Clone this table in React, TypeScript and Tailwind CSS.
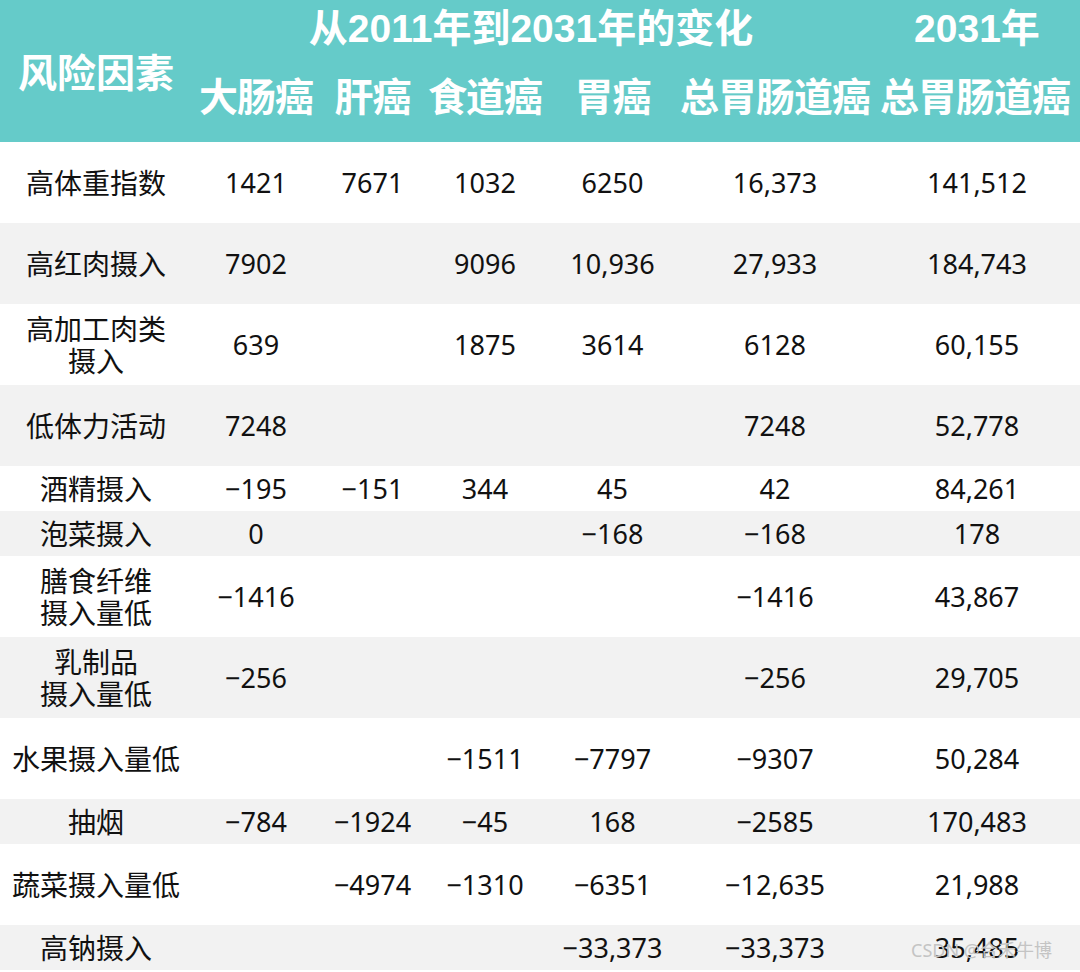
import React from "react";

type Row = { label: string[]; cells: string[]; tall: boolean };

const rows: Row[] = [
  { label: ["高体重指数"], cells: ["1421", "7671", "1032", "6250", "16,373", "141,512"], tall: true },
  { label: ["高红肉摄入"], cells: ["7902", "", "9096", "10,936", "27,933", "184,743"], tall: true },
  { label: ["高加工肉类", "摄入"], cells: ["639", "", "1875", "3614", "6128", "60,155"], tall: true },
  { label: ["低体力活动"], cells: ["7248", "", "", "", "7248", "52,778"], tall: true },
  { label: ["酒精摄入"], cells: ["−195", "−151", "344", "45", "42", "84,261"], tall: false },
  { label: ["泡菜摄入"], cells: ["0", "", "", "−168", "−168", "178"], tall: false },
  { label: ["膳食纤维", "摄入量低"], cells: ["−1416", "", "", "", "−1416", "43,867"], tall: true },
  { label: ["乳制品", "摄入量低"], cells: ["−256", "", "", "", "−256", "29,705"], tall: true },
  { label: ["水果摄入量低"], cells: ["", "", "−1511", "−7797", "−9307", "50,284"], tall: true },
  { label: ["抽烟"], cells: ["−784", "−1924", "−45", "168", "−2585", "170,483"], tall: false },
  { label: ["蔬菜摄入量低"], cells: ["", "−4974", "−1310", "−6351", "−12,635", "21,988"], tall: true },
  { label: ["高钠摄入"], cells: ["", "", "", "−33,373", "−33,373", "35,485"], tall: false },
];

const cols = "grid grid-cols-[192px_128px_105px_120px_135px_190px_210px]";
const headFont = { fontFamily: '"Liberation Sans", "Noto Sans CJK SC", sans-serif' };
const bodyFont = { fontFamily: '"Noto Sans", "Noto Sans CJK SC", sans-serif' };

export default function App() {
  return (
    <div className="relative w-[1080px] h-[972px] overflow-hidden bg-white text-[#111]" style={bodyFont}>
      <div className={`${cols} grid-rows-[56px_86px] h-[142px] bg-[#65cbc9] text-white font-bold text-[39px] leading-none`} style={headFont}>
        <div className="row-span-2 flex items-center justify-center pt-1">风险因素</div>
        <div className="col-span-5 flex items-center justify-center">从2011年到2031年的变化</div>
        <div className="flex items-center justify-center pl-1">2031年</div>
        {["大肠癌", "肝癌", "食道癌", "胃癌", "总胃肠道癌", "总胃肠道癌"].map((h, i) => (
          <div key={i} className="flex items-center justify-center whitespace-nowrap pb-1 tracking-[-1px]">
            {h}
          </div>
        ))}
      </div>

      {rows.map((r, i) => (
        <div
          key={i}
          className={`${cols} ${r.tall ? "h-[81px]" : "h-[45px]"} ${i % 2 === 1 ? "bg-[#f2f2f2]" : "bg-white"} text-[27px] leading-[32px]`}
        >
          <div className="flex flex-col items-center justify-center text-center text-[28px]">
            {r.label.map((l, j) => (
              <span key={j}>{l}</span>
            ))}
          </div>
          {r.cells.map((c, j) => (
            <div key={j} className={`flex items-center justify-center whitespace-nowrap ${j === 5 ? "pl-1" : ""}`}>
              {c}
            </div>
          ))}
        </div>
      ))}

      <div className="absolute right-[28px] bottom-[8px] text-[18px] text-[#c4c4c4]" style={bodyFont}>
        CSDN @合禾牛博
      </div>
    </div>
  );
}
